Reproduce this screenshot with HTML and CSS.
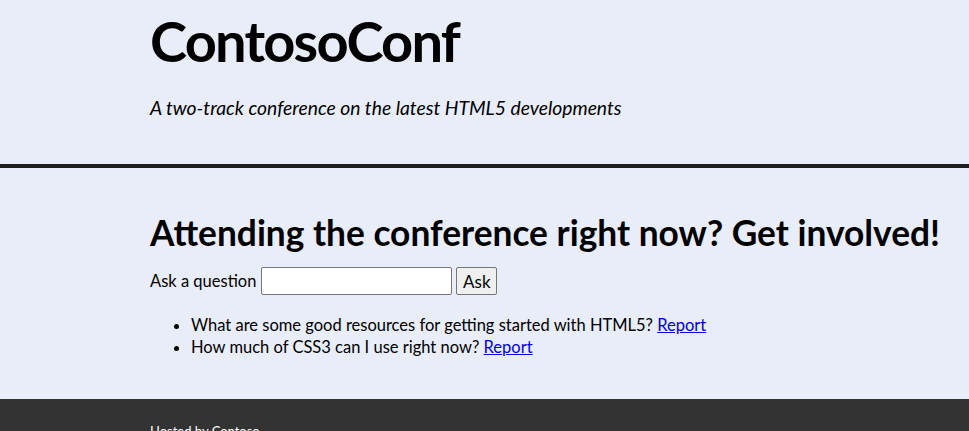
FILE: index.html
```html
<!DOCTYPE html>
<html lang="en">
<head>
<meta charset="utf-8">
<title>ContosoConf</title>
<link rel="stylesheet" href="styles.css">
</head>
<body>
<header class="site-header">
  <div class="wrap">
    <h1 class="site-title">ContosoConf</h1>
    <p class="tagline">A two-track conference on the latest HTML5 developments</p>
  </div>
</header>
<main class="main">
  <div class="wrap">
    <h2 class="section-title">Attending the conference right now? Get involved!</h2>
    <form class="ask-form">
      <label class="ask-label" for="q">Ask a question</label>
      <input class="ask-input" id="q" type="text">
      <button class="ask-button" type="button">Ask</button>
    </form>
    <ul class="questions">
      <li>What are some good resources for getting started with HTML5? <a href="#">Report</a></li>
      <li>How much of CSS3 can I use right now? <a href="#">Report</a></li>
    </ul>
  </div>
</main>
<footer class="site-footer">
  <div class="wrap">Hosted by Contoso</div>
</footer>
</body>
</html>
```

FILE: styles.css
```css
html, body {
  margin: 0;
  padding: 0;
}
body {
  background: #e9edf9;
  color: #000;
  font-family: Lato, "Open Sans", sans-serif;
  font-size: 16.5px;
  overflow: hidden;
}
.wrap {
  padding-left: 150px;
}
.site-header {
  padding-top: 6px;
  padding-bottom: 45px;
  border-bottom: 4px solid #1e1e1e;
}
.site-title {
  margin: 0;
  font-size: 56px;
  line-height: 70px;
  font-weight: 700;
  letter-spacing: -1.8px;
}
.tagline {
  margin: 21px 0 0;
  font-size: 19.3px;
  line-height: 22px;
  font-style: italic;
}
.main {
  padding-top: 45px;
  padding-bottom: 41px;
}
.section-title {
  margin: 0;
  font-size: 35.3px;
  line-height: 40px;
  font-weight: 700;
  white-space: nowrap;
}
.ask-form {
  margin-top: 14px;
  display: flex;
  align-items: center;
  gap: 4px;
  height: 28px;
}
.ask-label {
  font-size: 16.5px;
  line-height: 20px;
}
.ask-input {
  box-sizing: border-box;
  width: 191px;
  height: 28px;
  margin: 0 0 0 1px;
  border: 1px solid #767676;
  border-radius: 2px;
  background: #fff;
  padding: 0 4px;
  font: inherit;
}
.ask-button {
  box-sizing: border-box;
  width: 41px;
  height: 28px;
  margin: 0;
  padding: 0;
  border: 1px solid #767676;
  border-radius: 2px;
  background: #efefef;
  font-family: inherit;
  font-size: 17px;
  color: #000;
}
.questions {
  margin: 19px 0 0;
  padding-left: 41px;
  line-height: 22px;
}
.questions a {
  color: #0000ee;
}
.site-footer {
  background: #333333;
  color: #fff;
  font-size: 13px;
  padding-top: 24px;
  height: 60px;
}
```
